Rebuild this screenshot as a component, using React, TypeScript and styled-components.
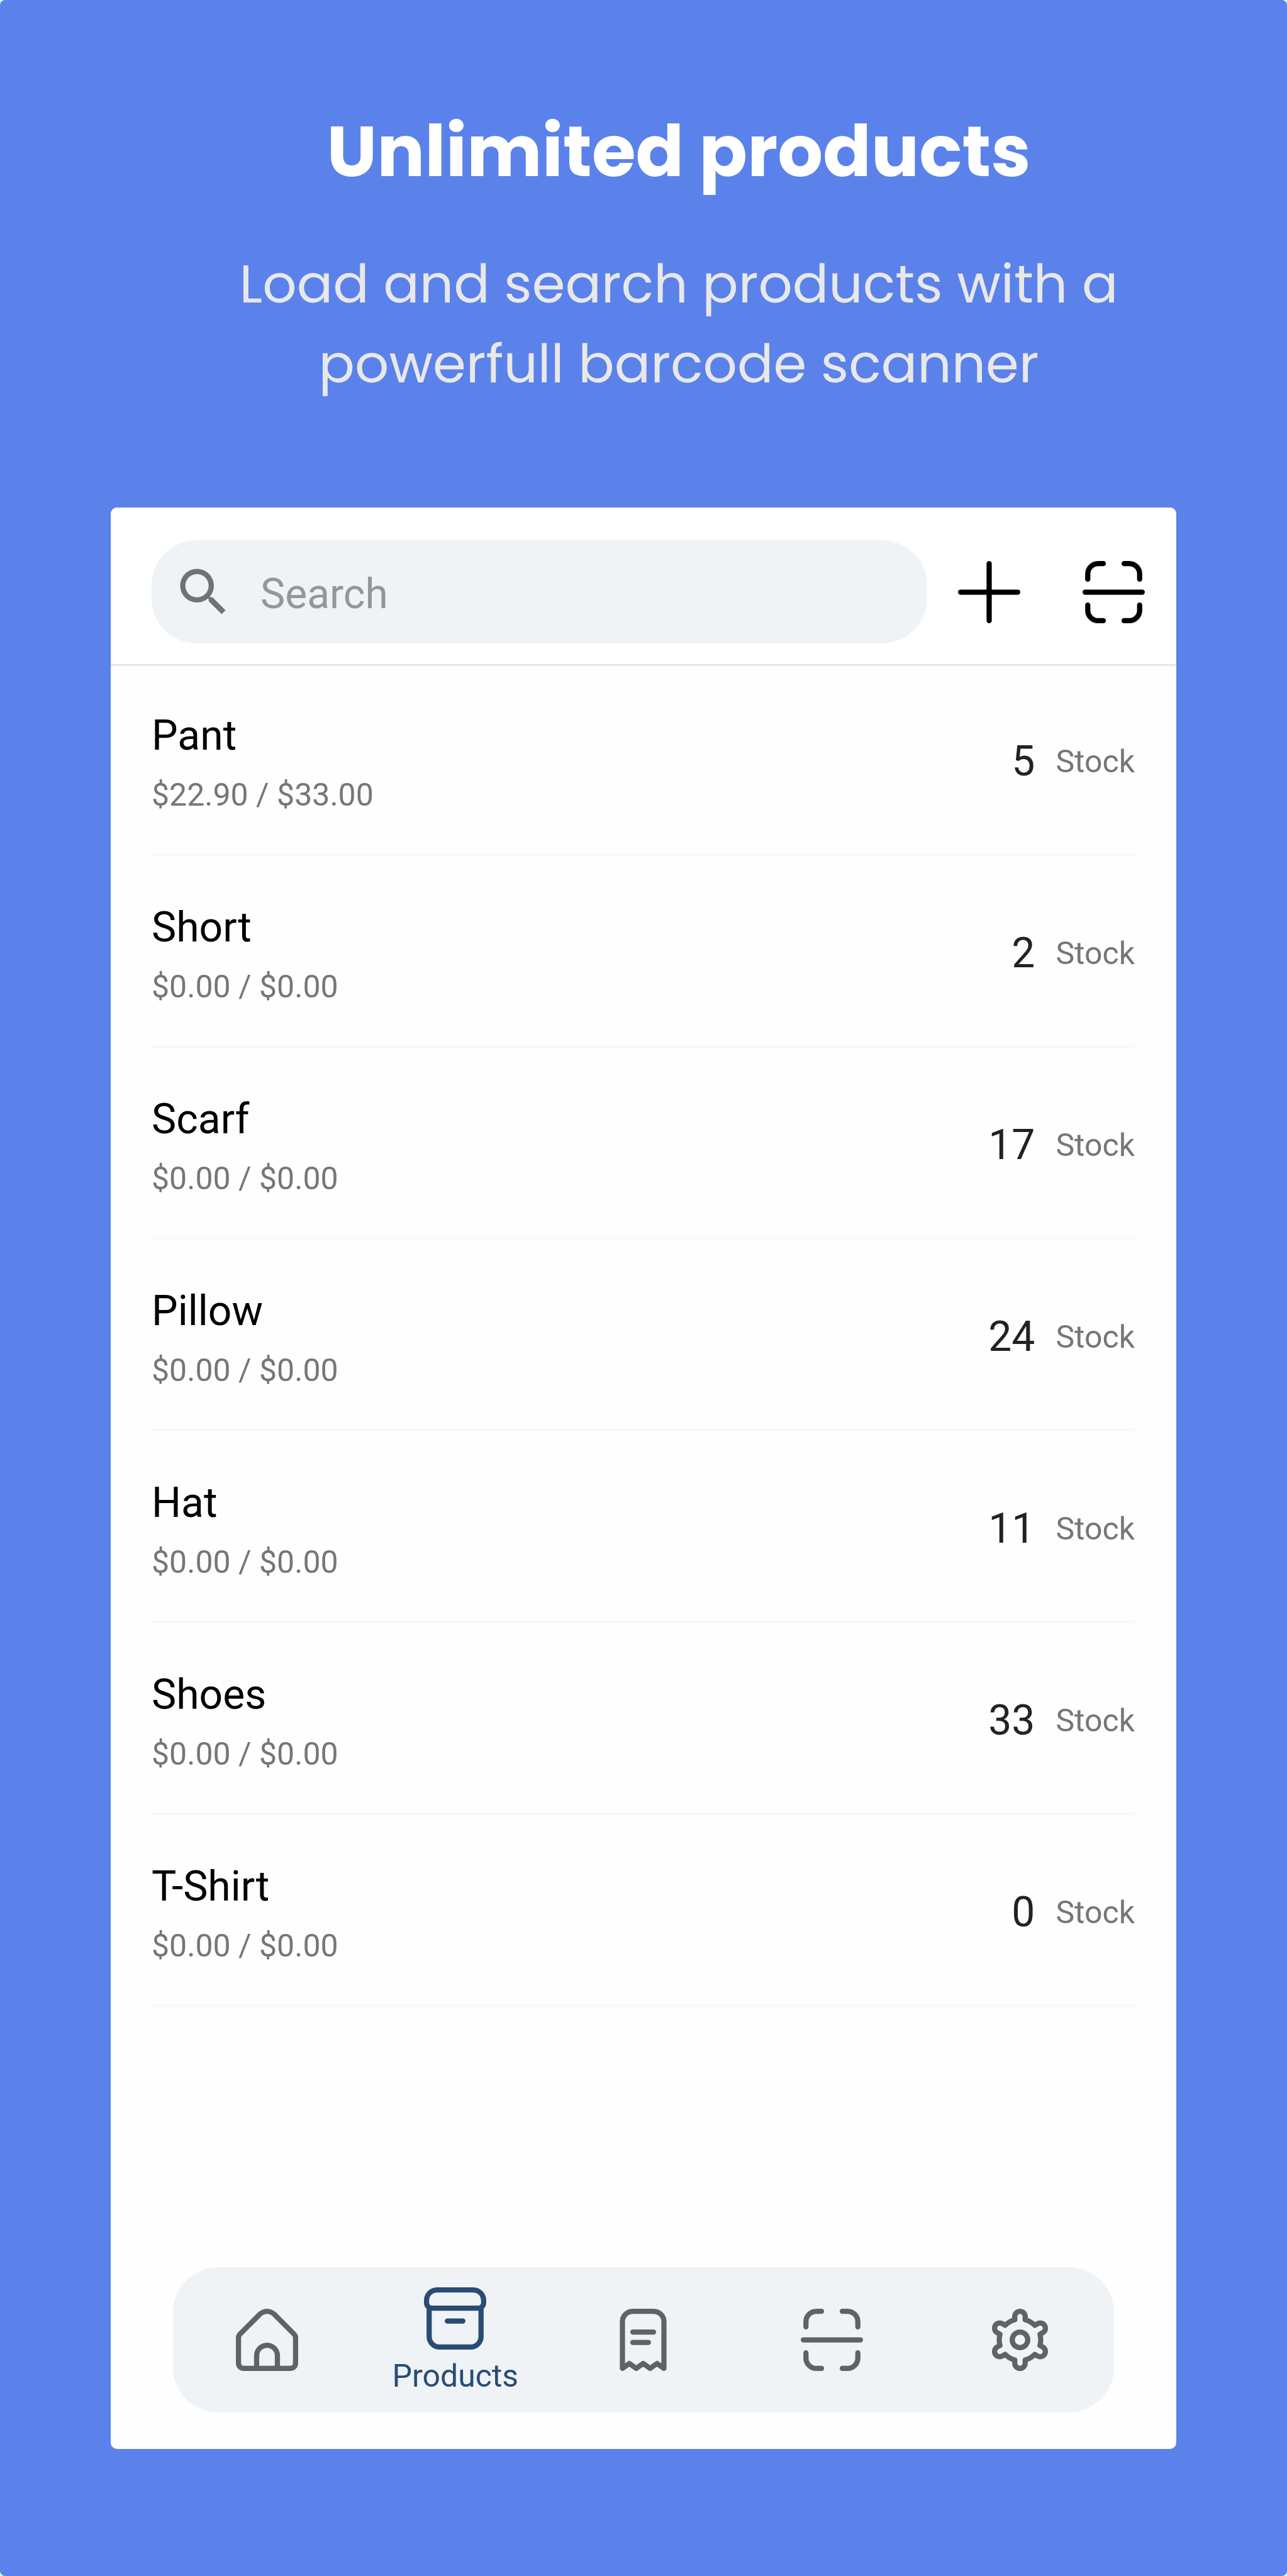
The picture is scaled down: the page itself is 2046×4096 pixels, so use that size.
import React from "react";
import styled, { createGlobalStyle } from "styled-components";

const GlobalStyle = createGlobalStyle`
  *, *::before, *::after { box-sizing: border-box; }
  body { margin: 0; background: #ffffff; font-family: Roboto, "Noto Sans", sans-serif; }
  h1, p, ul { margin: 0; padding: 0; }
  ul { list-style: none; }
  button { border: 0; padding: 0; background: none; color: inherit; font: inherit; cursor: pointer; }
`;

const Page = styled.div`
  display: flex;
  flex-direction: column;
  min-height: 100vh;
  padding: 0 176px 202px;
  border-radius: 8px;
  background: #5b82ea;
`;

const Hero = styled.header`
  padding: 160px 0 165px 112px;
  text-align: center;
  font-family: Poppins, Inter, "Open Sans", sans-serif;
`;

const Title = styled.h1`
  color: #ffffff;
  font-size: 113px;
  font-weight: 700;
  line-height: 162px;
`;

const Subtitle = styled.p`
  max-width: 1480px;
  margin: 66px auto 0;
  padding: 0 20px;
  color: #e8e8e8;
  font-size: 85px;
  font-weight: 400;
  line-height: 127px;
`;

const Screen = styled.main`
  display: flex;
  flex: 1;
  flex-direction: column;
  border-radius: 10px;
  background: #fefefe;
`;

const Toolbar = styled.div`
  display: flex;
  align-items: center;
  gap: 49px;
  padding: 52px 50px 33px 65px;
  border-radius: 10px 10px 0 0;
  background: #ffffff;
  box-shadow: 0 2px 3px rgba(0, 0, 0, 0.14);
`;

const SearchField = styled.label`
  display: flex;
  flex: 1;
  align-items: center;
  gap: 41px;
  height: 164px;
  padding: 0 33px;
  border-radius: 72px;
  background: #eff3f6;
  color: #717273;
`;

const SearchInput = styled.input`
  flex: 1;
  min-width: 0;
  padding: 8px 0 0;
  border: 0;
  outline: 0;
  background: none;
  color: #222222;
  font-family: inherit;
  font-size: 66px;
  line-height: 80px;
  &::placeholder { color: #959698; opacity: 1; }
`;

const Actions = styled.div`
  display: flex;
  gap: 99px;
  color: #000000;
`;

const IconButton = styled.button`
  display: flex;
`;

const Icon = styled.svg`
  display: block;
  flex: none;
  width: 99px;
  height: 99px;
  fill: currentColor;
`;

const LineIcon = styled(Icon)`
  fill: none;
  stroke: currentColor;
  stroke-width: 2;
  stroke-linecap: round;
  stroke-linejoin: round;
`;

const ProductList = styled.ul`
  padding: 0 66px 0 65px;
`;

const ProductRow = styled.li`
  display: flex;
  align-items: center;
  justify-content: space-between;
  min-height: 305px;
  border-bottom: 4px solid #f8f8f8;
`;

const ProductInfo = styled.div`
  display: grid;
  gap: 16px;
  padding-top: 2px;
`;

const ProductName = styled.span`
  color: #000000;
  font-size: 66px;
  line-height: 96px;
`;

const Muted = styled.span`
  color: #767676;
  font-size: 50px;
  line-height: 60px;
`;

const Stock = styled.div`
  display: flex;
  align-items: center;
  gap: 33px;
  padding-top: 8px;
`;

const Quantity = styled.span`
  color: #222222;
  font-size: 66px;
  line-height: 80px;
`;

const TabBar = styled.nav`
  display: grid;
  grid-template-columns: repeat(5, 1fr);
  height: 231px;
  margin: auto 99px 58px;
  border-radius: 72px;
  background: #eff3f6;
`;

const Tab = styled.button<{ $active?: boolean }>`
  display: flex;
  flex-direction: column;
  align-items: center;
  justify-content: center;
  gap: 12px;
  padding-top: ${(p) => (p.$active ? "4px" : "0")};
  color: ${(p) => (p.$active ? "#294c75" : "#616264")};
`;

const TabLabel = styled.span`
  font-size: 50px;
  line-height: 60px;
`;

const ScanIcon = () => (
  <LineIcon viewBox="0 0 24 24" aria-hidden="true">
    <path d="M2 7V5a4 4 0 0 1 4-4h2M16 1h2a4 4 0 0 1 4 4v2M22 17v2a4 4 0 0 1-4 4h-2M8 23H6a4 4 0 0 1-4-4v-2M1 12h22" />
  </LineIcon>
);

const PlusIcon = () => (
  <LineIcon viewBox="0 0 24 24" aria-hidden="true">
    <path d="M12 1v22M1 12h22" />
  </LineIcon>
);

const SearchIcon = () => (
  <Icon viewBox="0 0 24 24" aria-hidden="true">
    <path d="M15.5 14h-.79l-.28-.27A6.471 6.471 0 0 0 16 9.500 6.500 6.500 0 1 0 9.500 16c1.610 0 3.090-.59 4.230-1.570l.27.28v.79l5 4.990L20.490 19l-4.990-5zm-6 0C7.010 14 5 11.990 5 9.500S7.010 5 9.500 5 14 7.010 14 9.500 11.990 14 9.500 14z" />
  </Icon>
);

const HomeIcon = () => (
  <Icon viewBox="0 0 24 24" aria-hidden="true">
    <path d="M23.121,9.069,15.536,1.483a5.008,5.008,0,0,0-7.072,0L.879,9.069A2.978,2.978,0,0,0,0,11.190v9.817a3,3,0,0,0,3,3H21a3,3,0,0,0,3-3V11.190A2.978,2.978,0,0,0,23.121,9.069ZM15,22.007H9V18.073a3,3,0,0,1,6,0Zm7-1a1,1,0,0,1-1,1H17V18.073a5,5,0,0,0-10,0v3.934H3a1,1,0,0,1-1-1V11.190a1.008,1.008,0,0,1,.293-.707L9.878,2.900a3.008,3.008,0,0,1,4.244,0l7.585,7.586A1.008,1.008,0,0,1,22,11.190Z" />
  </Icon>
);

const BoxIcon = () => (
  <Icon viewBox="0 0 24 24" aria-hidden="true">
    <path d="M19,0H5A5.006,5.006,0,0,0,0,5V6A2.994,2.994,0,0,0,1,8.220V19a5.006,5.006,0,0,0,5,5H18a5.006,5.006,0,0,0,5-5V8.220A2.994,2.994,0,0,0,24,6V5A5.006,5.006,0,0,0,19,0ZM2,5A3,3,0,0,1,5,2H19a3,3,0,0,1,3,3V6a1,1,0,0,1-1,1H3A1,1,0,0,1,2,6ZM21,19a3,3,0,0,1-3,3H6a3,3,0,0,1-3-3V9H21ZM9,14h6a1,1,0,0,0,0-2H9a1,1,0,0,0,0,2Z" />
  </Icon>
);

const ReceiptIcon = () => (
  <LineIcon viewBox="0 0 24 24" aria-hidden="true">
    <path d="M4 23V5a4 4 0 0 1 4-4h8a4 4 0 0 1 4 4v18l-2.670-1.900L14.670 23 12 21.100 9.330 23l-2.660-1.900zM8 9h8M8 13h6" />
  </LineIcon>
);

const SettingsIcon = () => (
  <Icon viewBox="0 0 24 24" aria-hidden="true">
    <path d="M12,8a4,4,0,1,0,4,4A4,4,0,0,0,12,8Zm0,6a2,2,0,1,1,2-2A2,2,0,0,1,12,14Z" />
    <path d="M21.294,13.900l-.444-.256a9.100,9.100,0,0,0,0-3.290l.444-.256a3,3,0,1,0-3-5.200l-.445.257A8.977,8.977,0,0,0,15,3.513V3A3,3,0,0,0,9,3v.513A8.977,8.977,0,0,0,6.152,5.159L5.705,4.900a3,3,0,0,0-3,5.200l.444.256a9.100,9.100,0,0,0,0,3.290l-.444.256a3,3,0,1,0,3,5.200l.445-.257A8.977,8.977,0,0,0,9,20.487V21a3,3,0,0,0,6,0v-.513a8.977,8.977,0,0,0,2.848-1.646l.447.258a3,3,0,0,0,3-5.200Zm-2.548-3.776a7.048,7.048,0,0,1,0,3.750,1,1,0,0,0,.464,1.133l1.084.626a1,1,0,0,1-1,1.733l-1.086-.628a1,1,0,0,0-1.215.165,6.984,6.984,0,0,1-3.243,1.875,1,1,0,0,0-.751.969V21a1,1,0,0,1-2,0V19.748a1,1,0,0,0-.751-.969A6.984,6.984,0,0,1,7.006,16.900a1,1,0,0,0-1.215-.165l-1.084.627a1,1,0,1,1-1-1.732l1.084-.626a1,1,0,0,0,.464-1.133,7.048,7.048,0,0,1,0-3.750A1,1,0,0,0,4.790,8.992L3.706,8.366a1,1,0,0,1,1-1.733l1.086.628A1,1,0,0,0,7.006,7.100a6.984,6.984,0,0,1,3.243-1.875A1,1,0,0,0,11,4.252V3a1,1,0,0,1,2,0V4.252a1,1,0,0,0,.751.969A6.984,6.984,0,0,1,16.994,7.100a1,1,0,0,0,1.215.165l1.084-.627a1,1,0,1,1,1,1.732l-1.084.626A1,1,0,0,0,18.746,10.125Z" />
  </Icon>
);

type Product = { name: string; cost: string; price: string; stock: number };

const products: Product[] = [
  { name: "Pant", cost: "$22.90", price: "$33.00", stock: 5 },
  { name: "Short", cost: "$0.00", price: "$0.00", stock: 2 },
  { name: "Scarf", cost: "$0.00", price: "$0.00", stock: 17 },
  { name: "Pillow", cost: "$0.00", price: "$0.00", stock: 24 },
  { name: "Hat", cost: "$0.00", price: "$0.00", stock: 11 },
  { name: "Shoes", cost: "$0.00", price: "$0.00", stock: 33 },
  { name: "T-Shirt", cost: "$0.00", price: "$0.00", stock: 0 },
];

export default function App() {
  return (
    <>
      <GlobalStyle />
      <Page>
        <Hero>
          <Title>Unlimited products</Title>
          <Subtitle>Load and search products with a powerfull barcode scanner</Subtitle>
        </Hero>
        <Screen>
          <Toolbar>
            <SearchField>
              <SearchIcon />
              <SearchInput type="text" placeholder="Search" aria-label="Search" />
            </SearchField>
            <Actions>
              <IconButton type="button" aria-label="Add product"><PlusIcon /></IconButton>
              <IconButton type="button" aria-label="Scan barcode"><ScanIcon /></IconButton>
            </Actions>
          </Toolbar>
          <ProductList>
            {products.map((p) => (
              <ProductRow key={p.name}>
                <ProductInfo>
                  <ProductName>{p.name}</ProductName>
                  <Muted>{`${p.cost} / ${p.price}`}</Muted>
                </ProductInfo>
                <Stock>
                  <Quantity>{p.stock}</Quantity>
                  <Muted>Stock</Muted>
                </Stock>
              </ProductRow>
            ))}
          </ProductList>
          <TabBar aria-label="Main">
            <Tab type="button" aria-label="Home"><HomeIcon /></Tab>
            <Tab type="button" $active aria-current="page">
              <BoxIcon />
              <TabLabel>Products</TabLabel>
            </Tab>
            <Tab type="button" aria-label="Receipts"><ReceiptIcon /></Tab>
            <Tab type="button" aria-label="Scan"><ScanIcon /></Tab>
            <Tab type="button" aria-label="Settings"><SettingsIcon /></Tab>
          </TabBar>
        </Screen>
      </Page>
    </>
  );
}
